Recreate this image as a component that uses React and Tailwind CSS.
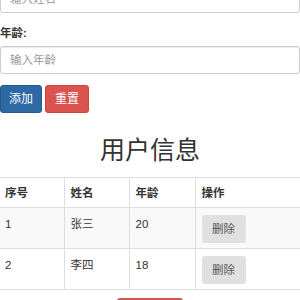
import React, { useState } from "react";

const font = { fontFamily: '"Liberation Sans", "Noto Sans CJK SC", sans-serif' };

const App = () => {
  const [users, setUsers] = useState([
    { id: 1, name: "张三", age: 20 },
    { id: 2, name: "李四", age: 18 },
  ]);
  const [name, setName] = useState("");
  const [age, setAge] = useState("");

  const removeUser = (id) => setUsers(users.filter((u) => u.id !== id));

  return (
    <div
      className="w-[300px] h-[300px] overflow-hidden bg-white text-[11.5px] leading-[16px] text-[#333]"
      style={font}
    >
      <input
        className="block w-[300px] h-[28px] mt-[-15px] px-[9px] border border-[#ccc] rounded-[3px] shadow-[inset_0_1px_1px_rgba(0,0,0,0.075)] placeholder:text-[#999] outline-none"
        placeholder="输入姓名"
        value={name}
        onChange={(e) => setName(e.target.value)}
      />
      <label className="block mt-[12px] font-bold">年龄:</label>
      <input
        className="block w-[300px] h-[28px] mt-[5px] px-[9px] border border-[#ccc] rounded-[3px] shadow-[inset_0_1px_1px_rgba(0,0,0,0.075)] placeholder:text-[#999] outline-none"
        placeholder="输入年龄"
        value={age}
        onChange={(e) => setAge(e.target.value)}
      />
      <div className="flex gap-[3px] mt-[11px]">
        <button className="h-[28px] w-[42px] rounded-[3px] bg-[#2d6aa3] border border-[#265a8c] text-white text-[12px]">
          添加
        </button>
        <button className="h-[28px] w-[44px] rounded-[3px] bg-[#d9534f] border border-[#d43f3a] text-white text-[12px]">
          重置
        </button>
      </div>
      <h2 className="mt-[22px] text-center text-[25px] leading-[30px] font-normal text-[#333]">
        用户信息
      </h2>
      <table className="mt-[12px] w-[306px] border-collapse table-fixed">
        <thead>
          <tr className="h-[30px] border-t border-b border-[#ddd]">
            <th className="w-[64px] px-[5px] text-left font-bold border-r border-[#ddd]">序号</th>
            <th className="w-[65px] px-[6px] text-left font-bold border-r border-[#ddd]">姓名</th>
            <th className="w-[66px] px-[6px] text-left font-bold border-r border-[#ddd]">年龄</th>
            <th className="px-[6px] text-left font-bold">操作</th>
          </tr>
        </thead>
        <tbody>
          {users.map((u, i) => (
            <tr
              key={u.id}
              className={`h-[41px] border-b border-[#ddd] align-top ${
                i % 2 === 0 ? "bg-[#f9f9f9]" : "bg-white"
              }`}
            >
              <td className="px-[5px] pt-[8px] border-r border-[#ddd]">{u.id}</td>
              <td className="px-[6px] pt-[8px] border-r border-[#ddd]">{u.name}</td>
              <td className="px-[6px] pt-[8px] border-r border-[#ddd]">{u.age}</td>
              <td className="px-[6px] pt-[7px]">
                <button
                  className="h-[28px] w-[44px] rounded-[3px] bg-[#e0e0e0] text-[#555]"
                  onClick={() => removeUser(u.id)}
                >
                  删除
                </button>
              </td>
            </tr>
          ))}
        </tbody>
      </table>
      <div className="flex justify-center mt-[8px]">
        <button className="h-[28px] w-[66px] rounded-[3px] bg-[#d9534f]" onClick={() => setUsers([])} />
      </div>
    </div>
  );
};

export default App;
